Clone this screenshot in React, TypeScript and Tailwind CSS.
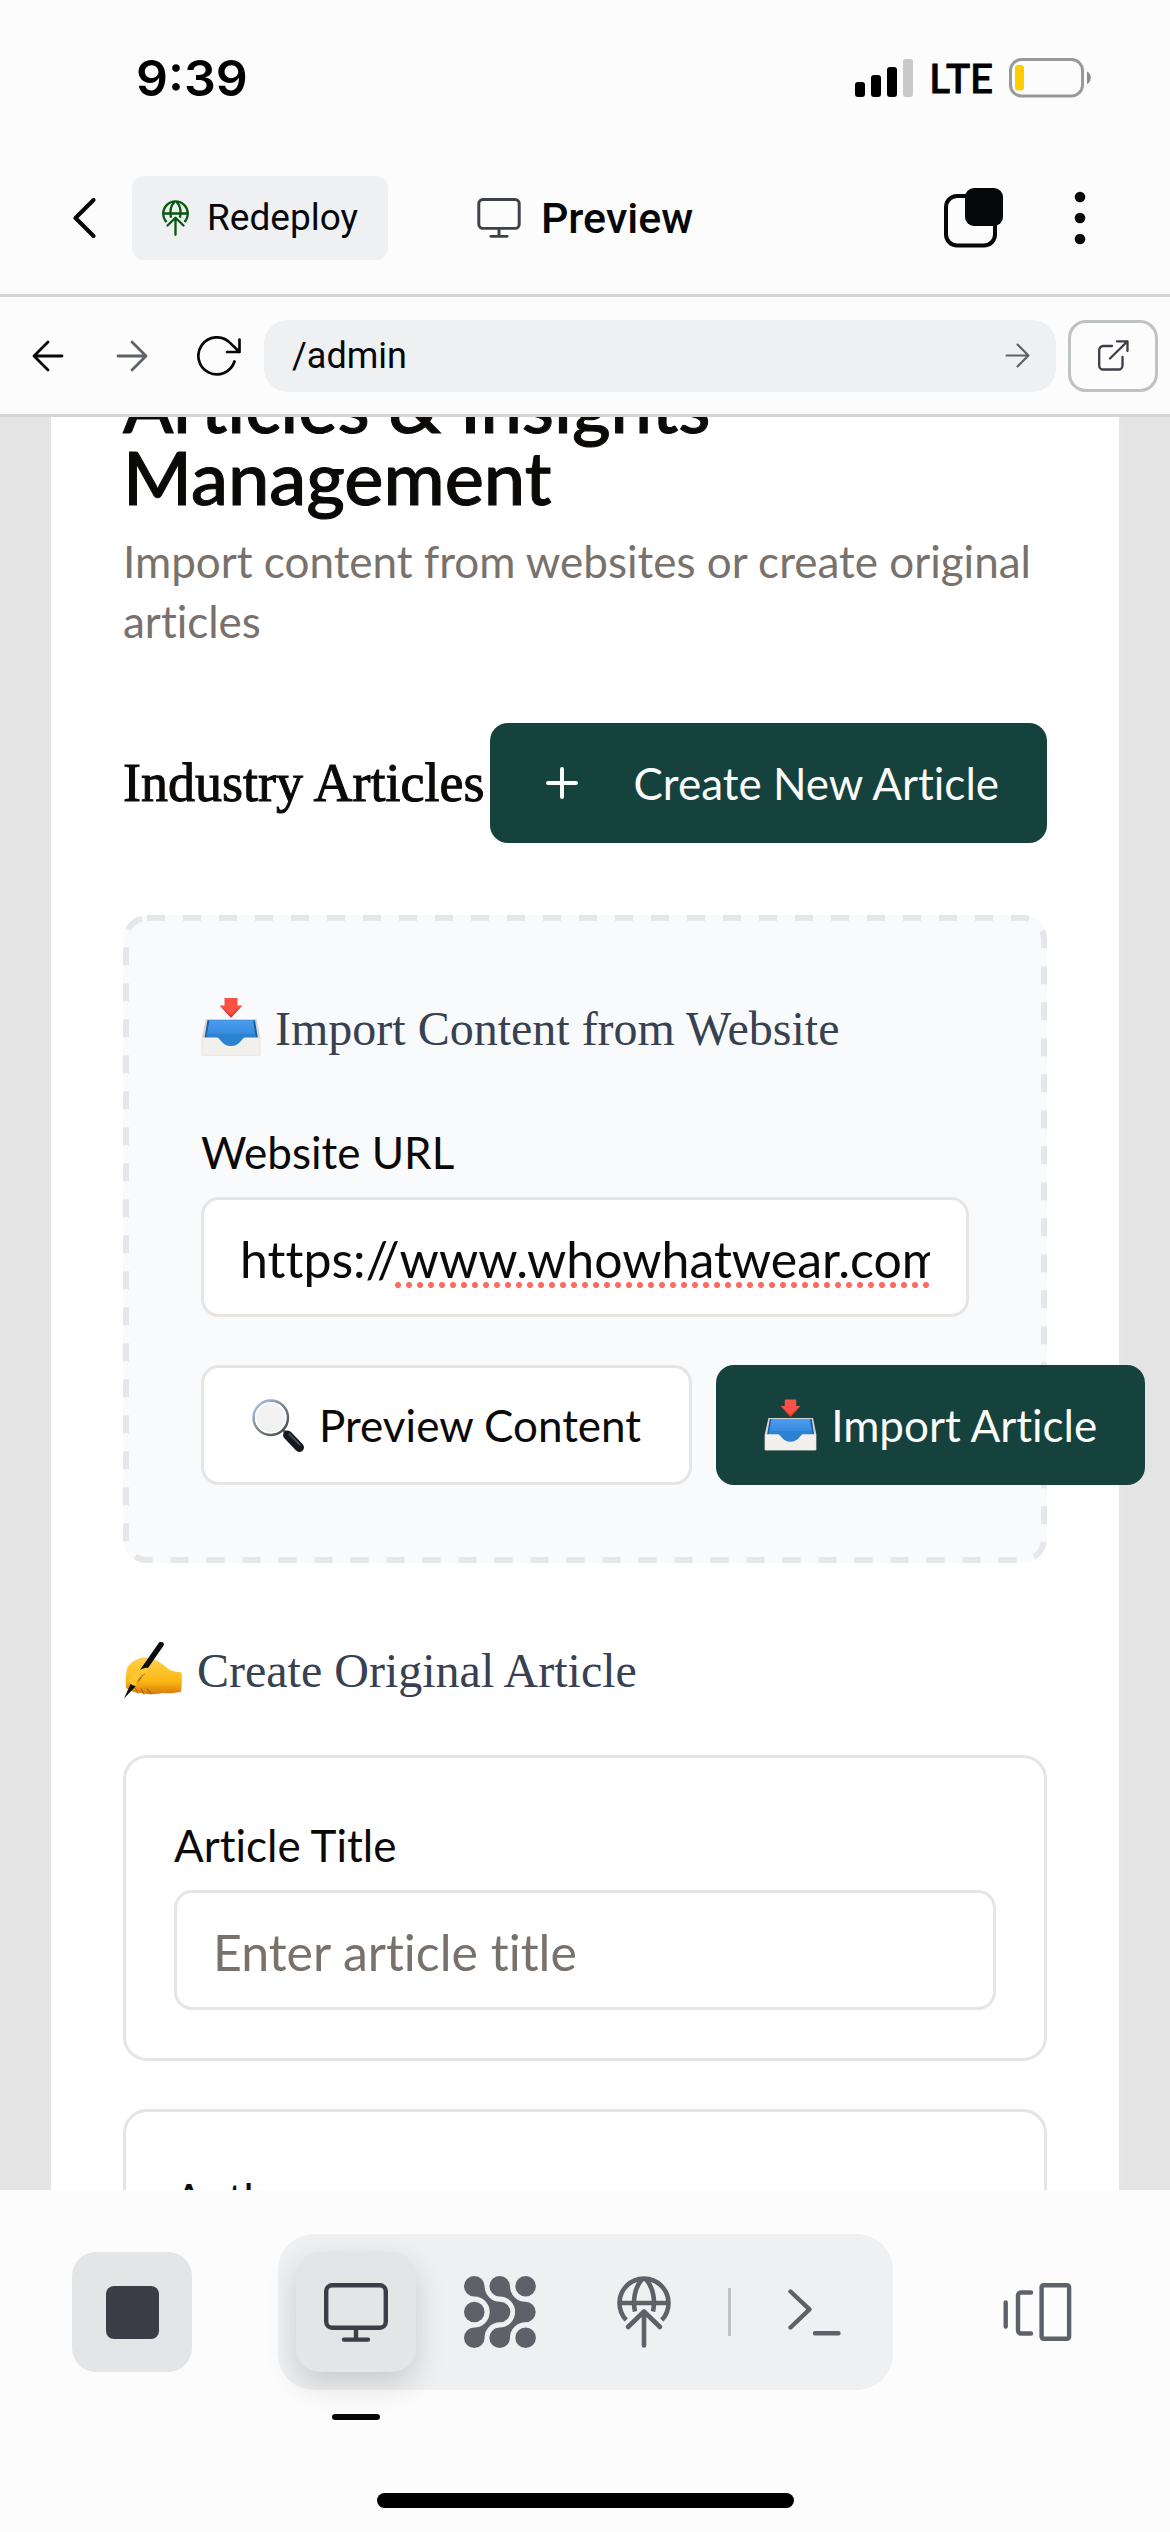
import { useState, type ReactNode } from "react";

function MonitorIcon({ className }: { className: string }) {
  return (
    <svg viewBox="0 0 64 59" fill="none" stroke="currentColor" strokeWidth="4.4" strokeLinecap="round" className={className} aria-hidden="true">
      <rect x="2.2" y="2.2" width="59.6" height="42.6" rx="6" />
      <path d="M32 46v10M20 56.6h24" />
    </svg>
  );
}

function GlobeUpIcon({ className }: { className: string }) {
  return (
    <svg viewBox="0 0 54 72" fill="none" stroke="currentColor" strokeWidth="4.6" className={className} aria-hidden="true">
      <path d="M9.2 44A24.5 24.5 0 1 1 44.8 44M2.5 27h49" />
      <path d="M25 3.5C18 11 15.500 24 18 35.500M29 3.500C36 11 38.500 24 36 35.500" />
      <path d="M27 37v32.500M11 51l16-15.500L43 51" strokeLinecap="round" strokeLinejoin="round" />
    </svg>
  );
}

function ArrowIcon({ className }: { className: string }) {
  return (
    <svg viewBox="0 0 32 32" fill="none" stroke="currentColor" strokeWidth="2.8" strokeLinecap="round" strokeLinejoin="round" className={className} aria-hidden="true">
      <path d="M2 16h28M16 2l14 14-14 14" />
    </svg>
  );
}

function TrayEmoji({ className }: { className: string }) {
  return (
    <svg viewBox="0 0 60 58" className={className} role="img" aria-label="Inbox tray">
      <defs>
        <linearGradient id="tray-blue" x1="0" y1="0" x2="0" y2="1">
          <stop offset="0" stopColor="#4b9df2" />
          <stop offset="1" stopColor="#2377c4" />
        </linearGradient>
      </defs>
      <path d="M5 21h50.500L59.300 40v17.500H.7V40z" fill="#d5d3cf" />
      <path d="M6.500 22.200h47.500l2.800 18H3.500z" fill="#155e9e" />
      <path d="M8.500 22.200h43.500l3 18L30 50 5 40.200z" fill="url(#tray-blue)" />
      <path d="M7 36h46l3 5-26 9L4 41z" fill="#2a82d0" />
      <path d="M1.200 39.500h14.500c3.500 0 5 8.500 14.300 8.500s10.800-8.500 14.300-8.500h14.500V56.500a1 1 0 0 1-1 1H2.200a1 1 0 0 1-1-1z" fill="#f1f0ed" />
      <path d="M23.500 0h13v7.500h4.800L30 19.700 18.700 7.500h4.800z" fill="#fb5147" />
      <path d="M41.300 7.500L30 19.700 18.700 7.500 30 17z" fill="#d93a32" />
    </svg>
  );
}

function MagnifierEmoji({ className }: { className: string }) {
  return (
    <svg viewBox="0 0 52 52" className={className} role="img" aria-label="Magnifying glass">
      <defs>
        <linearGradient id="lens-rim" x1="0" y1="0" x2="1" y2="1">
          <stop offset="0" stopColor="#a9cdf5" />
          <stop offset="0.500" stopColor="#7c858f" />
          <stop offset="1" stopColor="#3b3f45" />
        </linearGradient>
      </defs>
      <path d="M31 31l4 4" stroke="#555a60" strokeWidth="3" />
      <path d="M35 35.500l11.500 12" stroke="#15181c" strokeWidth="9" strokeLinecap="round" />
      <path d="M36.500 34.500l10.500 10.500" stroke="#4b545d" strokeWidth="1.500" strokeLinecap="round" />
      <circle cx="18.400" cy="18.400" r="16.800" fill="#f2f2f2" stroke="url(#lens-rim)" strokeWidth="2.600" />
      <circle cx="18.400" cy="18.400" r="14.800" fill="none" stroke="#ffffff" strokeWidth="1.400" />
    </svg>
  );
}

function WritingHandEmoji({ className }: { className: string }) {
  return (
    <svg viewBox="0 0 60 58" className={className} role="img" aria-label="Writing hand">
      <defs>
        <linearGradient id="hand-skin" x1="0" y1="0" x2="0" y2="1">
          <stop offset="0" stopColor="#ffd04a" />
          <stop offset="0.650" stopColor="#fcb814" />
          <stop offset="1" stopColor="#d87a0c" />
        </linearGradient>
      </defs>
      <path d="M3 46c-.5-6-.4-12 1-19 .7-4 8-10 15-11.200 4-.6 7 .4 10 1.200 8 1.800 12 7 18 11 4 2 8 1.500 11.500 2.500.7 5 .6 13-.7 19.500-8 1-12 1.600-18 1-6 1.500-14 1.500-20 .2C14 51 8 50 3 46z" fill="url(#hand-skin)" />
      <path d="M12 46l3 5M18 47l3 5M24 47l4 4.500" stroke="#b9650a" strokeWidth="1.400" strokeLinecap="round" />
      <path d="M38 2.500L14 37" stroke="#0b0c0e" strokeWidth="5.600" strokeLinecap="round" />
      <path d="M8 41l4.500 3.500L1 56.500z" fill="#0b0c0e" />
      <path d="M6 38c3-7 7-9 16-12 4-1 5 2 2 4-5 3-9 6-10 12-3 3-7 1-8-4z" fill="#ffc62e" />
      <path d="M22 32c-4 2-7 5-8 10" stroke="#e3920e" strokeWidth="1.200" fill="none" />
    </svg>
  );
}

function MatrixIcon({ className }: { className: string }) {
  const ribbon =
    "M10.300 0A10.300 10.300 0 0 1 20.600 10.300A15.400 15.400 0 0 0 36 25.700A10.300 10.300 0 0 1 36 46.300A15.400 15.400 0 0 0 20.600 61.700A10.300 10.300 0 1 1 10.300 51.400A15.400 15.400 0 0 0 10.300 20.600A10.300 10.300 0 0 1 10.300 0Z";
  return (
    <svg viewBox="0 0 72 72" fill="currentColor" className={className} aria-hidden="true">
      <path d={ribbon} />
      <path d={ribbon} transform="translate(25.400 0)" />
      <circle cx="10.300" cy="36" r="10.300" />
      <circle cx="61.600" cy="10.300" r="10.300" />
      <circle cx="61.600" cy="61.700" r="10.300" />
    </svg>
  );
}

function StatusBar() {
  return (
    <div className="flex h-[142px] items-center justify-between pt-[14px] pr-[78px] pl-[136px]">
      <time className="font-[Inter] text-[50px] leading-none font-semibold text-black">9:39</time>
      <div className="flex items-center">
        <svg viewBox="0 0 58 38" className="h-[38px] w-[58px]" aria-label="Signal strength">
          <rect x="0" y="23" width="10" height="15" rx="3" />
          <rect x="16" y="16" width="10" height="22" rx="3" />
          <rect x="32" y="8" width="10" height="30" rx="3" />
          <rect x="48" y="0" width="10" height="38" rx="3" fill="#c9c9c9" />
        </svg>
        <span className="mx-4 font-[Lato] text-[40px] leading-none font-medium text-black [-webkit-text-stroke:1px_black]">LTE</span>
        <svg viewBox="0 0 83 40" className="h-10 w-[83px]" aria-label="Battery low">
          <rect x="1.500" y="1.500" width="72" height="36.500" rx="11" fill="none" stroke="#999" strokeWidth="3" />
          <rect x="6" y="7" width="9" height="25.500" rx="3" fill="#ffcc00" />
          <path d="M78 13.500c5 2 5 10.500 0 12.500z" fill="#8b8b8b" />
        </svg>
      </div>
    </div>
  );
}

function NavBar() {
  return (
    <div className="grid h-[152px] grid-cols-[1fr_auto_1fr] items-center px-[73px]">
      <div className="flex items-center gap-9">
        <button type="button" aria-label="Back">
          <svg viewBox="0 0 23 40" className="h-10 w-[23px]" fill="none" stroke="currentColor" strokeWidth="4" strokeLinecap="round" strokeLinejoin="round">
            <path d="M20.500 2L2.500 20l18 18" />
          </svg>
        </button>
        <button type="button" className="flex h-[84px] items-center gap-[18px] rounded-xl bg-[#eff0f2] px-[30px] text-[37px]">
          <GlobeUpIcon className="h-9 w-[27px] text-[#06570f]" />
          Redeploy
        </button>
      </div>
      <h1 className="flex items-center gap-5 text-[43px] font-medium">
        <MonitorIcon className="h-10 w-11 text-[#3f4149]" />
        Preview
      </h1>
      <div className="flex items-center justify-end gap-[70px] pr-[11px]">
        <button type="button" aria-label="Windows">
          <svg viewBox="0 0 60 60" className="size-[60px]" aria-hidden="true">
            <rect x="2" y="8" width="49" height="49.500" rx="11" fill="none" stroke="#050709" strokeWidth="4" />
            <rect x="21" y="0" width="38" height="38" rx="9" fill="#050709" />
          </svg>
        </button>
        <button type="button" aria-label="More options">
          <svg viewBox="0 0 12 54" className="h-[54px] w-3" fill="#050709" aria-hidden="true">
            <circle cx="6" cy="6" r="5.300" />
            <circle cx="6" cy="27" r="5.300" />
            <circle cx="6" cy="48" r="5.300" />
          </svg>
        </button>
      </div>
    </div>
  );
}

function AddressBar() {
  const [path, setPath] = useState("/admin");
  return (
    <div className="flex h-[120px] items-center border-b-[3px] border-[#d3d5d7] pr-3 pl-[6px]">
      <button type="button" aria-label="Go back" className="grid w-[84px] place-items-center">
        <ArrowIcon className="size-8 rotate-180" />
      </button>
      <button type="button" aria-label="Go forward" className="grid w-[84px] place-items-center text-[#5f6168]">
        <ArrowIcon className="size-8" />
      </button>
      <button type="button" aria-label="Reload" className="grid w-[90px] place-items-center">
        <svg viewBox="0 0 44 40" className="h-10 w-11" fill="none" stroke="currentColor" strokeWidth="2.700" strokeLinecap="round" strokeLinejoin="round">
          <path d="M42.500 3.500V16H30M42.500 16l-9.700-9.400A18.500 18.500 0 1 0 37.500 25.500" />
        </svg>
      </button>
      <form className="flex h-[72px] min-w-0 flex-1 items-center rounded-3xl bg-[#eff0f2] pr-[26px] pl-7" onSubmit={(e) => e.preventDefault()}>
        <input aria-label="Page path" value={path} onChange={(e) => setPath(e.target.value)} className="min-w-0 flex-1 bg-transparent text-[36px] outline-none" />
        <button type="submit" aria-label="Go" className="text-[#5f6168]">
          <ArrowIcon className="size-[25px]" />
        </button>
      </form>
      <button type="button" aria-label="Open in new tab" className="ml-3 grid h-[72px] w-[90px] place-items-center rounded-[18px] border-[3px] border-[#bfc2c2] text-[#3c3e47]">
        <svg viewBox="0 0 31 31" className="size-[31px]" fill="none" stroke="currentColor" strokeWidth="2.300" strokeLinecap="round" strokeLinejoin="round">
          <path d="M14 6H5.200a4 4 0 0 0-4 4v15.500a4 4 0 0 0 4 4h15.300a4 4 0 0 0 4-4V17M12 18.500L29.500 1.300M19 1.300h10.500V11" />
        </svg>
      </button>
    </div>
  );
}

function SectionTitle({ icon, children }: { icon: ReactNode; children: ReactNode }) {
  return (
    <h3 className="mb-12 flex h-[72px] items-center gap-[14px] font-['Liberation_Serif',serif] text-[48px] leading-[72px] text-[#374151]">
      {icon}
      {children}
    </h3>
  );
}

function FieldLabel({ htmlFor, children }: { htmlFor: string; children: ReactNode }) {
  return (
    <label htmlFor={htmlFor} className="mb-6 flex h-[60px] items-end text-[44px] leading-[42px]">
      {children}
    </label>
  );
}

const fieldClass =
  "h-[120px] w-full rounded-[18px] border-[3px] border-[#e7e5e4] bg-white px-9 pt-1 text-[50px] text-[#0c0a09] outline-none placeholder:text-[#78716c]";

function ImportPanel() {
  const [url, setUrl] = useState("https://www.whowhatwear.com/");
  return (
    <section className="relative mb-[72px] rounded-3xl bg-[#f9fafb] p-[78px]">
      <svg className="pointer-events-none absolute inset-0 size-full" fill="none" stroke="#e5e7eb" strokeWidth="6" strokeDasharray="18 18" aria-hidden="true">
        <rect x="3" y="3" rx="21" className="h-[calc(100%-6px)] w-[calc(100%-6px)]" />
      </svg>
      <SectionTitle icon={<TrayEmoji className="-mt-1 h-[58px] w-[60px]" />}>Import Content from Website</SectionTitle>
      <FieldLabel htmlFor="website-url">Website URL</FieldLabel>
      <div className="relative mb-12">
        <input id="website-url" value={url} onChange={(e) => setUrl(e.target.value)} className={fieldClass} />
        <span
          aria-hidden="true"
          className="pointer-events-none absolute right-[39px] bottom-[29px] left-[194px] h-[6px] bg-[radial-gradient(circle_at_3px_3px,#ff6b63_2.7px,transparent_3.3px)] bg-[size:11px_6px]"
        />
      </div>
      <div className="relative flex gap-6 text-[44px] whitespace-nowrap">
        <button type="button" className="flex h-[120px] shrink-0 items-center gap-[14px] rounded-[18px] border-[3px] border-[#e7e5e4] bg-white px-12">
          <MagnifierEmoji className="size-[53px]" />
          Preview Content
        </button>
        <button type="button" className="flex h-[120px] shrink-0 items-center gap-[14px] rounded-[18px] bg-[#15423d] px-12 text-[#fafaf9]">
          <TrayEmoji className="h-[52px] w-[53px]" />
          Import Article
        </button>
      </div>
    </section>
  );
}

function ArticleField({ id, label, placeholder }: { id: string; label: string; placeholder: string }) {
  return (
    <div className="rounded-3xl border-[3px] border-[#e5e5e5] p-12">
      <FieldLabel htmlFor={id}>{label}</FieldLabel>
      <input id={id} placeholder={placeholder} className={fieldClass} />
    </div>
  );
}

function AdminPage() {
  return (
    <main className="min-h-0 flex-1 overflow-hidden bg-[#e4e4e4] px-12 font-[Lato,sans-serif] text-[#0c0a09] [font-variant-ligatures:none]">
      <div className="-mt-[120px] border-x-[3px] border-[#e5e5e5] bg-white px-[72px] pt-[72px]">
        <h1 className="mb-[18px] text-[74px] leading-[72px] font-medium [-webkit-text-stroke:1px_currentColor]">
          Articles &amp; Insights
          <br />
          Management
        </h1>
        <p className="mb-[72px] text-[44px] leading-[60px] text-[#78716c]">Import content from websites or create original articles</p>
        <div className="mb-[72px] flex items-center justify-between whitespace-nowrap">
          <h2 className="font-['Liberation_Serif',serif] text-[54px] [-webkit-text-stroke:1px_currentColor]">Industry Articles</h2>
          <button type="button" className="flex h-[120px] items-center gap-12 rounded-[18px] bg-[#15423d] px-12 text-[44px] text-[#fafaf9]">
            <svg viewBox="0 0 24 24" className="size-12" fill="none" stroke="currentColor" strokeWidth="2" strokeLinecap="round" aria-hidden="true">
              <path d="M5 12h14M12 5v14" />
            </svg>
            Create New Article
          </button>
        </div>
        <ImportPanel />
        <SectionTitle icon={<WritingHandEmoji className="h-[58px] w-[60px]" />}>Create Original Article</SectionTitle>
        <div className="flex flex-col gap-12 pb-12">
          <ArticleField id="article-title" label="Article Title" placeholder="Enter article title" />
          <ArticleField id="article-author" label="Author" placeholder="Enter author name" />
        </div>
      </div>
    </main>
  );
}

function TabButton({ label, active, children }: { label: string; active?: boolean; children: ReactNode }) {
  return (
    <button
      type="button"
      aria-label={label}
      aria-pressed={active}
      className={
        active
          ? "relative grid size-[120px] place-items-center rounded-3xl bg-[#e4e5e6] text-[#3c3e47] shadow-[0_12px_30px_rgba(0,0,0,0.16)]"
          : "grid size-[120px] place-items-center text-[#5f6168]"
      }
    >
      {children}
      {active && <span className="absolute -bottom-12 h-[6px] w-12 rounded-full bg-[#050709]" />}
    </button>
  );
}

function BottomBar() {
  return (
    <footer className="pt-11 pb-6">
      <div className="flex items-center justify-between px-[72px]">
        <button type="button" aria-label="Stop" className="grid size-[120px] place-items-center rounded-3xl bg-[#e4e5e6]">
          <span className="size-[53px] rounded-lg bg-[#3c3e47]" />
        </button>
        <nav className="flex items-center gap-6 rounded-[36px] bg-[#eff0f2] p-[18px]">
          <TabButton label="Preview" active>
            <MonitorIcon className="h-[59px] w-16" />
          </TabButton>
          <TabButton label="Agent">
            <MatrixIcon className="size-[72px]" />
          </TabButton>
          <TabButton label="Deploy">
            <GlobeUpIcon className="h-[72px] w-[54px]" />
          </TabButton>
          <span className="h-12 w-[3px] bg-[#c0c2c4]" />
          <TabButton label="Console">
            <svg viewBox="0 0 53 47" className="h-[47px] w-[53px]" fill="none" stroke="currentColor" strokeWidth="4.400" strokeLinecap="round" strokeLinejoin="round">
              <path d="M2.500 2.500l19 17.800-19 18.200M27 44.300h23.500" />
            </svg>
          </TabButton>
        </nav>
        <button type="button" aria-label="Switch tabs" className="grid size-[120px] place-items-center text-[#5f6168]">
          <svg viewBox="0 0 70 58" className="h-[58px] w-[70px]" fill="none" stroke="currentColor" strokeWidth="4.400" strokeLinecap="round" strokeLinejoin="round">
            <path d="M2.700 19.500v24M28 9.500H18a3 3 0 0 0-3 3v35a3 3 0 0 0 3 3h10" />
            <rect x="38.600" y="2.200" width="27.500" height="53.500" rx="2" />
          </svg>
        </button>
      </div>
      <div className="mx-auto mt-[103px] h-[15px] w-[417px] rounded-full bg-black" />
    </footer>
  );
}

export default function App() {
  return (
    <div className="flex h-screen flex-col overflow-hidden bg-[#fcfcfc] font-[Roboto,sans-serif] text-[#050709]">
      <header>
        <StatusBar />
        <NavBar />
        <div className="border-t-[3px] border-[#d3d5d7]">
          <AddressBar />
        </div>
      </header>
      <AdminPage />
      <BottomBar />
    </div>
  );
}
